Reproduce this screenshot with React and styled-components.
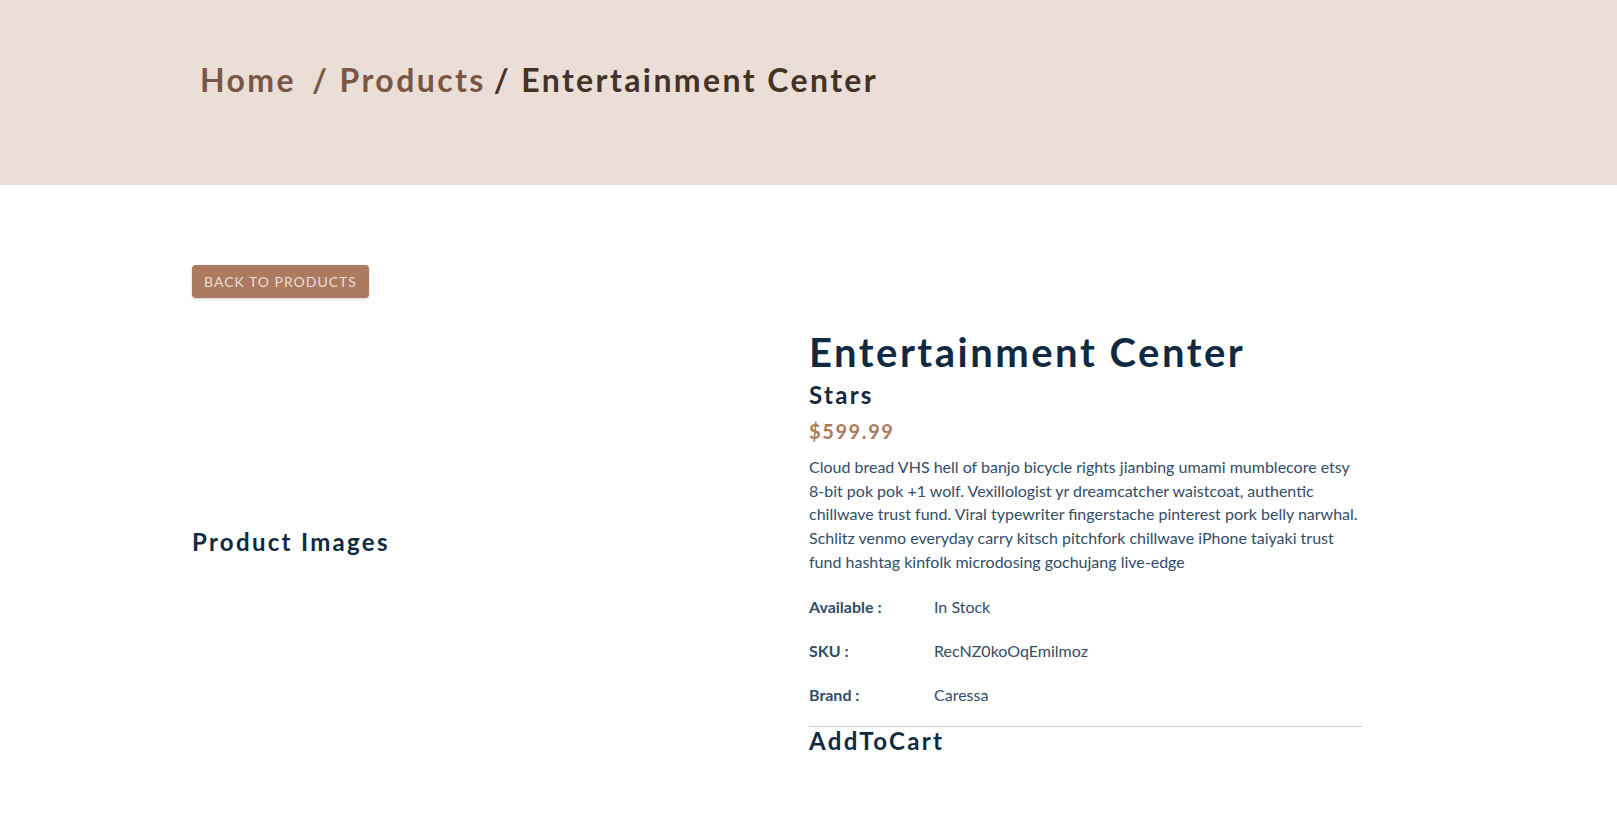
import React from 'react'
import styled, { createGlobalStyle } from 'styled-components'

const GlobalStyle = createGlobalStyle`
*{
  box-sizing: border-box;
  margin: 0;
  padding: 0;
}
body{
  font-family: Lato, "Open Sans", sans-serif;
  background: #fff;
  color: #102a42;
  font-size: 16px;
  line-height: 1.5;
}
`

const Hero = styled.section`
width: 100%;
height: 185px;
background: #eaded7;
padding-top: 60px;
`

const Center = styled.div`
width: 1170px;
margin-left: 192px;
`

const Crumbs = styled.h3`
font-size: 32px;
line-height: 40px;
font-weight: 700;
letter-spacing: 2.4px;
color: #453227;
`

const CrumbLink = styled.a`
color: #795744;
padding: 8px;
text-decoration: none;
`

const Page = styled.section`
padding: 80px 0;
`

const BackButton = styled.a`
display: inline-block;
background: #ab7a5f;
color: #eaded7;
text-transform: uppercase;
letter-spacing: 1px;
font-size: 14px;
line-height: 21px;
padding: 6px 12px;
border-radius: 4px;
box-shadow: 0 1px 3px rgba(0,0,0,0.2);
text-decoration: none;
`

const ProductCenter = styled.div`
display: grid;
grid-template-columns: 1fr 1fr;
gap: 64px;
align-items: center;
margin-top: 32px;
`

const Placeholder = styled.h4`
font-size: 24px;
line-height: ${props => props.$lh || 30}px;
letter-spacing: 2.3px;
font-weight: 700;
color: #102a42;
margin-top: ${props => props.$top || 0}px;
`

const Content = styled.section`
display: flex;
flex-direction: column;
`

const Title = styled.h2`
font-size: 40px;
line-height: 44px;
letter-spacing: 2.5px;
font-weight: 700;
color: #102a42;
`

const Price = styled.h5`
font-size: 20px;
line-height: 25px;
letter-spacing: 1.6px;
font-weight: 700;
color: #ab7a5f;
margin-top: 9px;
`

const Desc = styled.p`
color: #324d67;
line-height: 23.7px;
margin-top: 11px;
margin-bottom: 21px;
`

const Info = styled.p`
display: grid;
grid-template-columns: 125px 1fr;
width: 300px;
color: #324d67;
line-height: 24px;
margin-bottom: 20.4px;
span{
  font-weight: 700;
}
`

const Rule = styled.hr`
border: none;
border-top: 1px solid #bcccdc;
margin-top: -2px;
`

const product = {
  name: 'Entertainment Center',
  price: '$599.99',
  description:
    'Cloud bread VHS hell of banjo bicycle rights jianbing umami mumblecore etsy 8-bit pok pok +1 wolf. Vexillologist yr dreamcatcher waistcoat, authentic chillwave trust fund. Viral typewriter fingerstache pinterest pork belly narwhal. Schlitz venmo everyday carry kitsch pitchfork chillwave iPhone taiyaki trust fund hashtag kinfolk microdosing gochujang live-edge',
  info: [
    ['Available :', 'In Stock'],
    ['SKU :', 'RecNZ0koOqEmilmoz'],
    ['Brand :', 'Caressa'],
  ],
}

const App = () => {
  return (
    <>
      <GlobalStyle />
      <Hero>
        <Center>
          <Crumbs>
            <CrumbLink href="#">Home</CrumbLink>
            <CrumbLink href="#">/ Products</CrumbLink>/ {product.name}
          </Crumbs>
        </Center>
      </Hero>
      <Page>
        <Center>
          <BackButton href="#">back to products</BackButton>
          <ProductCenter>
            <Placeholder>Product Images</Placeholder>
            <Content>
              <Title>{product.name}</Title>
              <Placeholder $top={6}>Stars</Placeholder>
              <Price>{product.price}</Price>
              <Desc>{product.description}</Desc>
              {product.info.map(([label, value]) => (
                <Info key={label}>
                  <span>{label}</span>
                  {value}
                </Info>
              ))}
              <Rule />
              <Placeholder $lh={28}>AddToCart</Placeholder>
            </Content>
          </ProductCenter>
        </Center>
      </Page>
    </>
  )
}

export default App
